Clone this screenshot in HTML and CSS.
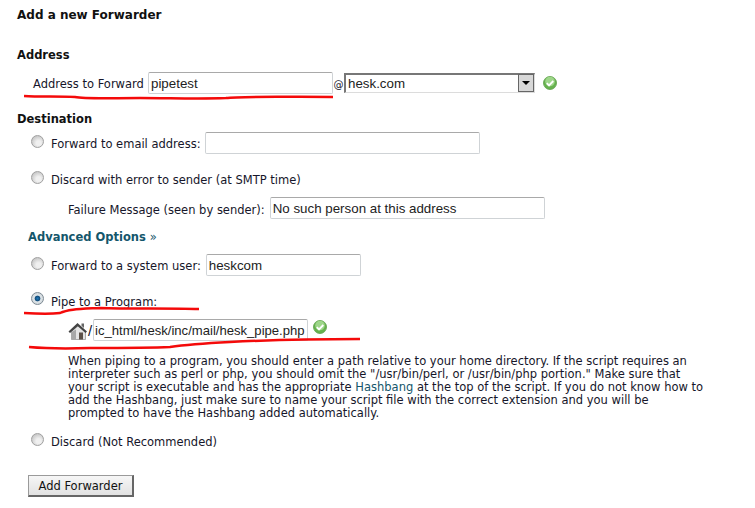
FILE: index.html
```html
<!DOCTYPE html>
<html lang="en">
<head>
    <meta charset="UTF-8">
    <meta name="viewport" content="width=device-width, initial-scale=1.0">
    <title>Add a new Forwarder</title>
    <link rel="stylesheet" href="styles.css">
</head>
<body>
    <div class="page">
        <h1>Add a new Forwarder</h1>

        <h2 class="address-heading">Address</h2>
        <div class="address-row">
            <label class="address-label">Address to Forward</label>
            <div class="field address-input">pipetest</div>
            <span class="at">@</span>
            <div class="select">
                <span class="select-value">hesk.com</span>
                <span class="select-button"><span class="arrow"></span></span>
            </div>
            <svg class="check check-domain" viewBox="0 0 14 14"><use href="#check"></use></svg>
        </div>

        <h2 class="destination-heading">Destination</h2>
        <div class="option option-email">
            <span class="radio"></span>
            <label>Forward to email address:</label>
            <div class="field email-input"></div>
        </div>
        <div class="option option-discard-error">
            <span class="radio"></span>
            <label>Discard with error to sender (at SMTP time)</label>
        </div>
        <div class="failure-row">
            <label>Failure Message (seen by sender):</label>
            <div class="field failure-input">No such person at this address</div>
        </div>

        <div class="advanced">Advanced Options <span class="chevrons">»</span></div>

        <div class="option option-user">
            <span class="radio"></span>
            <label>Forward to a system user:</label>
            <div class="field user-input">heskcom</div>
        </div>
        <div class="option option-pipe">
            <span class="radio checked"></span>
            <label>Pipe to a Program:</label>
        </div>
        <div class="pipe-row">
            <svg class="home" viewBox="0 0 20 20">
                <path d="M3.500 10.500V18.500h14V10.500L10 4.500z" fill="#e4e4e4" stroke="#9a9a9a" stroke-width="0.800"/>
                <path d="M3.500 11v7.500h4.500V8.500z" fill="#a8a8a8"/>
                <path d="M11 11.500h4v7h-4z" fill="#5c5148"/>
                <path d="M0.500 10.500L9.500 2l9.500 8.500-1.500 1.500L9.800 5.300 2 12z" fill="#444"/>
                <path d="M13.500 2.500h2.500v4.500l-2.500-2.200z" fill="#666"/>
            </svg>
            <span class="slash">/</span>
            <div class="field pipe-input">ic_html/hesk/inc/mail/hesk_pipe.php</div>
            <svg class="check check-pipe" viewBox="0 0 14 14"><use href="#check"></use></svg>
        </div>
        <p class="help">When piping to a program, you should enter a path relative to your home directory. If the script requires an<br>interpreter such as perl or php, you should omit the "/usr/bin/perl, or /usr/bin/php portion." Make sure that<br>your script is executable and has the appropriate <a href="#">Hashbang</a> at the top of the script. If you do not know how to<br>add the Hashbang, just make sure to name your script file with the correct extension and you will be<br>prompted to have the Hashbang added automatically.</p>
        <div class="option option-discard">
            <span class="radio"></span>
            <label>Discard (Not Recommended)</label>
        </div>
        <button class="submit">Add Forwarder</button>
    </div>

    <!-- red marker lines drawn over the screenshot -->
    <svg class="marker" viewBox="0 0 755 508">
        <path d="M24 96C40 97 60 96 75 97C85 99 110 98 140 98C170 98 200 99 226 98C240 96 290 97 333 97"/>
        <path d="M24 313C40 314 52 314 60 313C68 309 80 309 100 308C130 309 170 308 199 309"/>
        <path d="M29 347C40 348 60 349 90 348C120 348 150 348 170 347C190 344 210 343 230 342C270 340 300 339 360 339"/>
        <defs>
            <symbol id="check" viewBox="0 0 14 14">
                <circle cx="7" cy="7" r="6.500" fill="#66b24e" stroke="#5a9e46" stroke-width="0.800"/>
                <circle cx="7" cy="5.500" r="4.800" fill="#9ed68a"/>
                <path d="M3.800 7.200L6 9.400l4.300-4.400" fill="none" stroke="#fff" stroke-width="1.800"/>
            </symbol>
        </defs>
    </svg>
</body>
</html>
```
FILE: styles.css
```css
body {
    margin: 0;
    background: #fff;
    color: #16162a;
    font-family: 'DejaVu Sans', Verdana, sans-serif;
    font-size: 11.500px;
    line-height: 13px;
    overflow: hidden;
}
.page {
    position: relative;
    width: 755px;
    height: 508px;
    padding: 8px 0 0 17px;
    box-sizing: border-box;
}
h1 {
    margin: 0;
    font-size: 12px;
    line-height: 14px;
    font-weight: bold;
    color: #111;
}
h2 {
    margin: 0;
    font-size: 11.500px;
    line-height: 14px;
    font-weight: bold;
    color: #111;
}
.address-heading {
    margin-top: 26px;
}
.address-row {
    display: flex;
    align-items: center;
    height: 22px;
    margin-top: 10px;
    padding-left: 16px;
}
.address-label {
    width: 115px;
    margin-top: 2px;
}
.field {
    box-sizing: border-box;
    height: 22px;
    line-height: 20px;
    padding: 1px 2px 0;
    background: #fff;
    border: 1px solid #cfd3d6;
    border-top-color: #a9a9a9;
    border-radius: 2px;
    font-family: 'Liberation Sans', Arial, sans-serif;
    font-size: 13.330px;
    color: #222;
    white-space: nowrap;
    overflow: hidden;
}
.address-input {
    width: 185px;
}
.at {
    width: 11px;
    text-align: center;
    font-size: 10px;
    margin-top: 2px;
}
.select {
    box-sizing: border-box;
    display: flex;
    justify-content: space-between;
    width: 191px;
    height: 20px;
    border: 1px solid #dcdcdc;
    border-top: 2px solid #777;
    border-left: 2px solid #777;
    font-family: 'Liberation Sans', Arial, sans-serif;
    font-size: 13.330px;
    line-height: 17px;
    color: #222;
}
.select-value {
    padding-left: 2px;
}
.select-button {
    box-sizing: border-box;
    display: flex;
    align-items: center;
    justify-content: center;
    width: 16px;
    height: 18px;
    margin-top: -1px;
    border: 1px solid #666;
    background: #d8d8d8;
}
.arrow {
    border-top: 4px solid #000;
    border-left: 4px solid transparent;
    border-right: 4px solid transparent;
}
.check {
    width: 14px;
    height: 14px;
    flex: none;
}
.check-domain {
    margin-left: 8px;
    margin-top: -1px;
}
.destination-heading {
    margin-top: 18px;
}
.option {
    display: flex;
    align-items: center;
    height: 22px;
    padding-left: 14px;
}
.option label {
    margin: 2px 0 0 7px;
}
.radio {
    box-sizing: border-box;
    width: 13px;
    height: 13px;
    flex: none;
    margin-top: -3px;
    border: 1px solid #a0a0a0;
    border-radius: 50%;
    background: radial-gradient(circle at 60% 65%, #f0f0f0 25%, #c4c4c4 80%);
}
.radio.checked {
    border-color: #7d8a94;
    background: radial-gradient(circle, #1f78b8 0, #124c7a 32%, #dfe6ea 42%, #c4c9cd 100%);
}
.option-email {
    margin-top: 6px;
}
.option-email .field {
    margin-left: 4px;
}
.email-input {
    width: 275px;
}
.option-discard-error {
    margin-top: 14px;
}
.failure-row {
    display: flex;
    align-items: center;
    height: 22px;
    margin-top: 7px;
    padding-left: 51px;
}
.failure-row label {
    margin-top: 4px;
}
.failure-input {
    width: 275px;
    margin-left: 5px;
}
.advanced {
    margin: 11px 0 0 11px;
    font-size: 11.500px;
    line-height: 14px;
    font-weight: bold;
    color: #14566b;
}
.chevrons {
    font-weight: normal;
}
.option-user {
    margin-top: 10px;
}
.option-user .field {
    margin-left: 5px;
}
.user-input {
    width: 155px;
}
.option-pipe {
    margin-top: 13px;
}
.option-pipe label {
    margin-top: 4px;
}
.pipe-row {
    display: flex;
    align-items: center;
    height: 22px;
    margin-top: 8px;
    padding-left: 51px;
}
.home {
    width: 20px;
    height: 20px;
    flex: none;
    margin-top: 1px;
}
.slash {
    width: 5px;
    font-family: 'Liberation Sans', Arial, sans-serif;
    font-size: 15px;
}
.pipe-input {
    width: 215px;
    padding-left: 1px;
    font-size: 13.100px;
}
.check-pipe {
    margin-left: 5px;
    margin-top: -6px;
}
.help {
    width: 650px;
    margin: 14px 0 0 51px;
    white-space: nowrap;
}
a {
    color: #14566b;
    text-decoration: none;
}
.option-discard {
    margin-top: 10px;
}
.submit {
    display: block;
    box-sizing: border-box;
    width: 106px;
    height: 22px;
    margin: 23px 0 0 11px;
    padding: 0;
    border: 1px solid #9a9a9a;
    border-right: 2px solid #666;
    border-bottom: 2px solid #666;
    background: linear-gradient(#f6f6f6, #e2e2e2);
    font-family: 'DejaVu Sans', Verdana, sans-serif;
    font-size: 11.500px;
    color: #111;
}
.marker {
    position: absolute;
    left: 0;
    top: 0;
    width: 755px;
    height: 508px;
    pointer-events: none;
}
.marker > path {
    fill: none;
    stroke: #f40a0a;
    stroke-width: 2.500;
}
```
